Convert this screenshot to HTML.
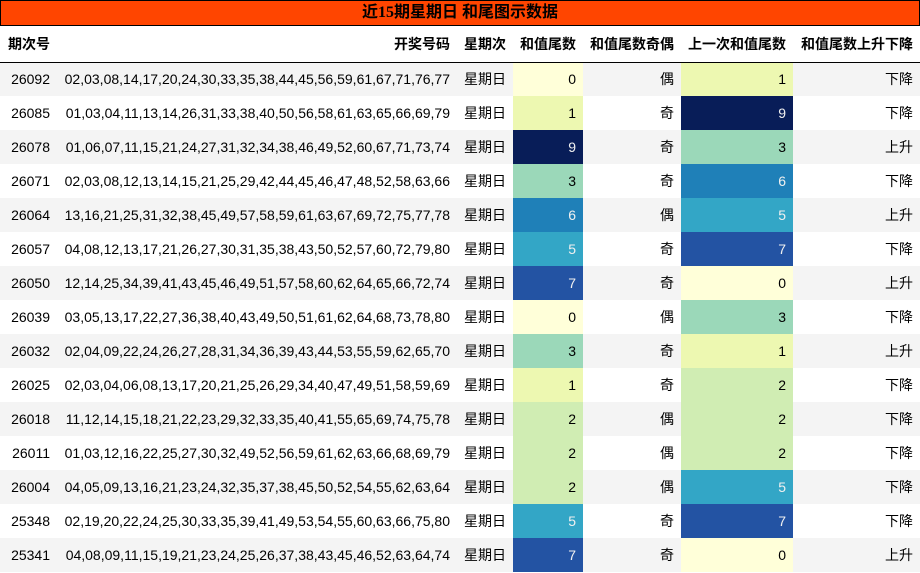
<!DOCTYPE html>
<html><head><meta charset="utf-8"><style>
*{margin:0;padding:0;box-sizing:border-box}
body{width:920px;height:573px;background:#fff;font-family:"Liberation Sans","Noto Sans CJK SC",sans-serif;font-size:14px;color:#000;overflow:hidden}
.title{height:26px;background:#ff4500;border:1px solid #000;text-align:center;font-weight:bold;font-size:16px;line-height:24px;font-family:"Liberation Serif","Noto Sans CJK SC",sans-serif}
table{border-collapse:collapse;width:920px;table-layout:fixed}
th{height:36px;font-weight:bold;text-align:right;padding:0 7px;border-bottom:1px solid #000;font-size:14px}
th:first-child{text-align:left;padding-left:8px}
td{height:34px;text-align:right;padding:0 7px;white-space:nowrap}
tr.g td{background:#f4f4f4}
.c0{background:#ffffd9!important}.c1{background:#edf8b1!important}.c2{background:#d0edb3!important}.c3{background:#9bd8b9!important}
.c5{background:#33a6c6!important;color:#f0f0f0}.c6{background:#1f80b8!important;color:#f0f0f0}.c7{background:#2353a3!important;color:#f0f0f0}.c9{background:#081d58!important;color:#f0f0f0}
</style></head><body>
<div class="title">近15期星期日 和尾图示数据</div>
<table>
<colgroup><col style="width:57px"><col style="width:400px"><col style="width:56px"><col style="width:70px"><col style="width:98px"><col style="width:112px"><col style="width:127px"></colgroup>
<tr><th>期次号</th><th>开奖号码</th><th>星期次</th><th>和值尾数</th><th>和值尾数奇偶</th><th>上一次和值尾数</th><th>和值尾数上升下降</th></tr>
<tr class="g"><td>26092</td><td>02,03,08,14,17,20,24,30,33,35,38,44,45,56,59,61,67,71,76,77</td><td>星期日</td><td class="c0">0</td><td>偶</td><td class="c1">1</td><td>下降</td></tr>
<tr><td>26085</td><td>01,03,04,11,13,14,26,31,33,38,40,50,56,58,61,63,65,66,69,79</td><td>星期日</td><td class="c1">1</td><td>奇</td><td class="c9">9</td><td>下降</td></tr>
<tr class="g"><td>26078</td><td>01,06,07,11,15,21,24,27,31,32,34,38,46,49,52,60,67,71,73,74</td><td>星期日</td><td class="c9">9</td><td>奇</td><td class="c3">3</td><td>上升</td></tr>
<tr><td>26071</td><td>02,03,08,12,13,14,15,21,25,29,42,44,45,46,47,48,52,58,63,66</td><td>星期日</td><td class="c3">3</td><td>奇</td><td class="c6">6</td><td>下降</td></tr>
<tr class="g"><td>26064</td><td>13,16,21,25,31,32,38,45,49,57,58,59,61,63,67,69,72,75,77,78</td><td>星期日</td><td class="c6">6</td><td>偶</td><td class="c5">5</td><td>上升</td></tr>
<tr><td>26057</td><td>04,08,12,13,17,21,26,27,30,31,35,38,43,50,52,57,60,72,79,80</td><td>星期日</td><td class="c5">5</td><td>奇</td><td class="c7">7</td><td>下降</td></tr>
<tr class="g"><td>26050</td><td>12,14,25,34,39,41,43,45,46,49,51,57,58,60,62,64,65,66,72,74</td><td>星期日</td><td class="c7">7</td><td>奇</td><td class="c0">0</td><td>上升</td></tr>
<tr><td>26039</td><td>03,05,13,17,22,27,36,38,40,43,49,50,51,61,62,64,68,73,78,80</td><td>星期日</td><td class="c0">0</td><td>偶</td><td class="c3">3</td><td>下降</td></tr>
<tr class="g"><td>26032</td><td>02,04,09,22,24,26,27,28,31,34,36,39,43,44,53,55,59,62,65,70</td><td>星期日</td><td class="c3">3</td><td>奇</td><td class="c1">1</td><td>上升</td></tr>
<tr><td>26025</td><td>02,03,04,06,08,13,17,20,21,25,26,29,34,40,47,49,51,58,59,69</td><td>星期日</td><td class="c1">1</td><td>奇</td><td class="c2">2</td><td>下降</td></tr>
<tr class="g"><td>26018</td><td>11,12,14,15,18,21,22,23,29,32,33,35,40,41,55,65,69,74,75,78</td><td>星期日</td><td class="c2">2</td><td>偶</td><td class="c2">2</td><td>下降</td></tr>
<tr><td>26011</td><td>01,03,12,16,22,25,27,30,32,49,52,56,59,61,62,63,66,68,69,79</td><td>星期日</td><td class="c2">2</td><td>偶</td><td class="c2">2</td><td>下降</td></tr>
<tr class="g"><td>26004</td><td>04,05,09,13,16,21,23,24,32,35,37,38,45,50,52,54,55,62,63,64</td><td>星期日</td><td class="c2">2</td><td>偶</td><td class="c5">5</td><td>下降</td></tr>
<tr><td>25348</td><td>02,19,20,22,24,25,30,33,35,39,41,49,53,54,55,60,63,66,75,80</td><td>星期日</td><td class="c5">5</td><td>奇</td><td class="c7">7</td><td>下降</td></tr>
<tr class="g"><td>25341</td><td>04,08,09,11,15,19,21,23,24,25,26,37,38,43,45,46,52,63,64,74</td><td>星期日</td><td class="c7">7</td><td>奇</td><td class="c0">0</td><td>上升</td></tr>
</table>
</body></html>
